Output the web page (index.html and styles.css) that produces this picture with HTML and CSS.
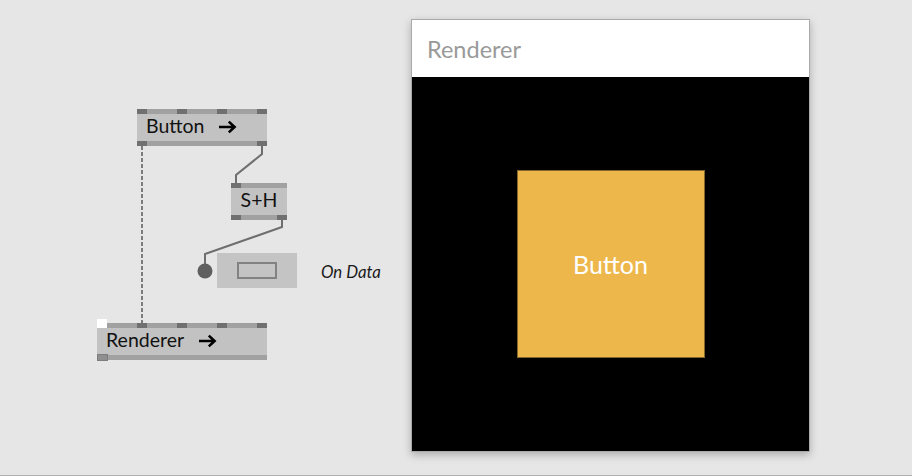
FILE: index.html
```html
<!DOCTYPE html>
<html>
<head>
<meta charset="utf-8">
<link rel="stylesheet" href="styles.css">
</head>
<body>
<div class="stage">
  <div class="patch">
    <svg class="wires" width="411" height="475" viewBox="0 0 411 475">
      <path class="wire-dashed" d="M142 146 V323"/>
      <path class="wire" d="M262 146 V154 L236 175 V183"/>
      <path class="wire" d="M282 220 V227 L205 254 V271"/>
      <circle class="wire-dot" cx="205" cy="271" r="7.5"/>
    </svg>

    <div class="node node-button">
      <div class="bar"><i class="pin"></i><i class="pin"></i><i class="pin"></i><i class="pin"></i></div>
      <div class="body"><span>Button</span><svg class="arrow" width="18" height="14" viewBox="0 0 18 14"><path d="M0 7H15.5M9.8 1.6L15.6 7L9.8 12.4"/></svg></div>
      <div class="bar"><i class="pin"></i><i class="pin"></i></div>
    </div>

    <div class="node node-sh">
      <div class="bar"><i class="pin"></i></div>
      <div class="body body-center"><span>S+H</span></div>
      <div class="bar"><i class="pin"></i><i class="pin"></i></div>
    </div>

    <div class="iobox"><div class="iobox-field"></div></div>
    <div class="label">On Data</div>

    <div class="node node-renderer">
      <div class="bar"><i class="pin pin-white"></i><i class="pin"></i><i class="pin"></i><i class="pin"></i><i class="pin"></i></div>
      <div class="body"><span>Renderer</span><svg class="arrow" width="18" height="14" viewBox="0 0 18 14"><path d="M0 7H15.5M9.8 1.6L15.6 7L9.8 12.4"/></svg></div>
      <div class="bar"><i class="pin pin-out"></i></div>
    </div>
  </div>

  <div class="window">
    <div class="window-head">Renderer</div>
    <div class="window-view">
      <div class="square">Button</div>
    </div>
  </div>
</div>
</body>
</html>
```
FILE: styles.css
```css
html, body {
  margin: 0;
  padding: 0;
}
body {
  background: #e6e6e6;
  width: 912px;
  height: 476px;
  overflow: hidden;
  font-family: Lato, "Open Sans", sans-serif;
}
.stage {
  display: flex;
  align-items: flex-start;
  height: 475px;
  border-bottom: 1px solid #b0b0b0;
}
.patch {
  position: relative;
  width: 411px;
  height: 475px;
  flex: none;
}
.wires {
  position: absolute;
  left: 0;
  top: 0;
}
.wire {
  fill: none;
  stroke: #6e6e6e;
  stroke-width: 2;
}
.wire-dashed {
  fill: none;
  stroke: #7c7c7c;
  stroke-width: 2;
  stroke-dasharray: 4 2;
}
.wire-dot {
  fill: #5f5f5f;
}

.node {
  position: absolute;
  display: flex;
  flex-direction: column;
}
.node-button { left: 137px; top: 109px; width: 130px; }
.node-sh { left: 231px; top: 183px; width: 56px; }
.node-renderer { left: 97px; top: 323px; width: 170px; }

.bar {
  height: 5px;
  background: #a1a1a1;
  display: flex;
  justify-content: space-between;
  align-items: flex-start;
}
.pin {
  display: block;
  width: 10px;
  height: 5px;
  background: #707070;
}
.pin-white {
  background: #ffffff;
  height: 10px;
  margin-top: -4px;
}
.pin-out {
  background: #8f8f8f;
  box-sizing: border-box;
  border: 1px solid #7d7d7d;
  width: 11px;
  height: 7px;
  margin-top: -1px;
}
.body {
  height: 27px;
  box-sizing: border-box;
  background: #c2c2c2;
  display: flex;
  align-items: center;
  padding-left: 9px;
  font-size: 19.5px;
  line-height: 23px;
  padding-bottom: 4px;
  color: #111111;
}
.body-center {
  justify-content: center;
  padding-left: 0;
}
.arrow {
  margin-left: 15px;
  margin-top: 2px;
  flex: none;
}
.arrow path {
  fill: none;
  stroke: #000000;
  stroke-width: 2.6;
}

.iobox {
  position: absolute;
  left: 217px;
  top: 253px;
  width: 80px;
  height: 35px;
  background: #c4c4c4;
  display: flex;
  align-items: center;
  justify-content: center;
}
.iobox-field {
  width: 40px;
  height: 17px;
  box-sizing: border-box;
  border: 2px solid #828282;
}
.label {
  position: absolute;
  left: 321px;
  top: 261px;
  font-style: italic;
  font-size: 16.8px;
  color: #1a1a1a;
  white-space: nowrap;
}

.window {
  margin-top: 19px;
  width: 399px;
  height: 433px;
  box-sizing: border-box;
  border: 1px solid #aaaaaa;
  box-shadow: 0 3px 8px rgba(0, 0, 0, 0.25);
  display: flex;
  flex-direction: column;
  flex: none;
}
.window-head {
  height: 57px;
  flex: none;
  background: #ffffff;
  display: flex;
  align-items: center;
  padding-left: 15px;
  font-size: 23.5px;
  color: #9a9a9a;
}
.window-view {
  flex: 1;
  background: #000000;
  display: flex;
  align-items: center;
  justify-content: center;
}
.square {
  width: 188px;
  height: 188px;
  box-sizing: border-box;
  background: #edb74b;
  border: 1px solid #87682c;
  display: flex;
  align-items: center;
  justify-content: center;
  color: #ffffff;
  font-size: 25px;
}
```
